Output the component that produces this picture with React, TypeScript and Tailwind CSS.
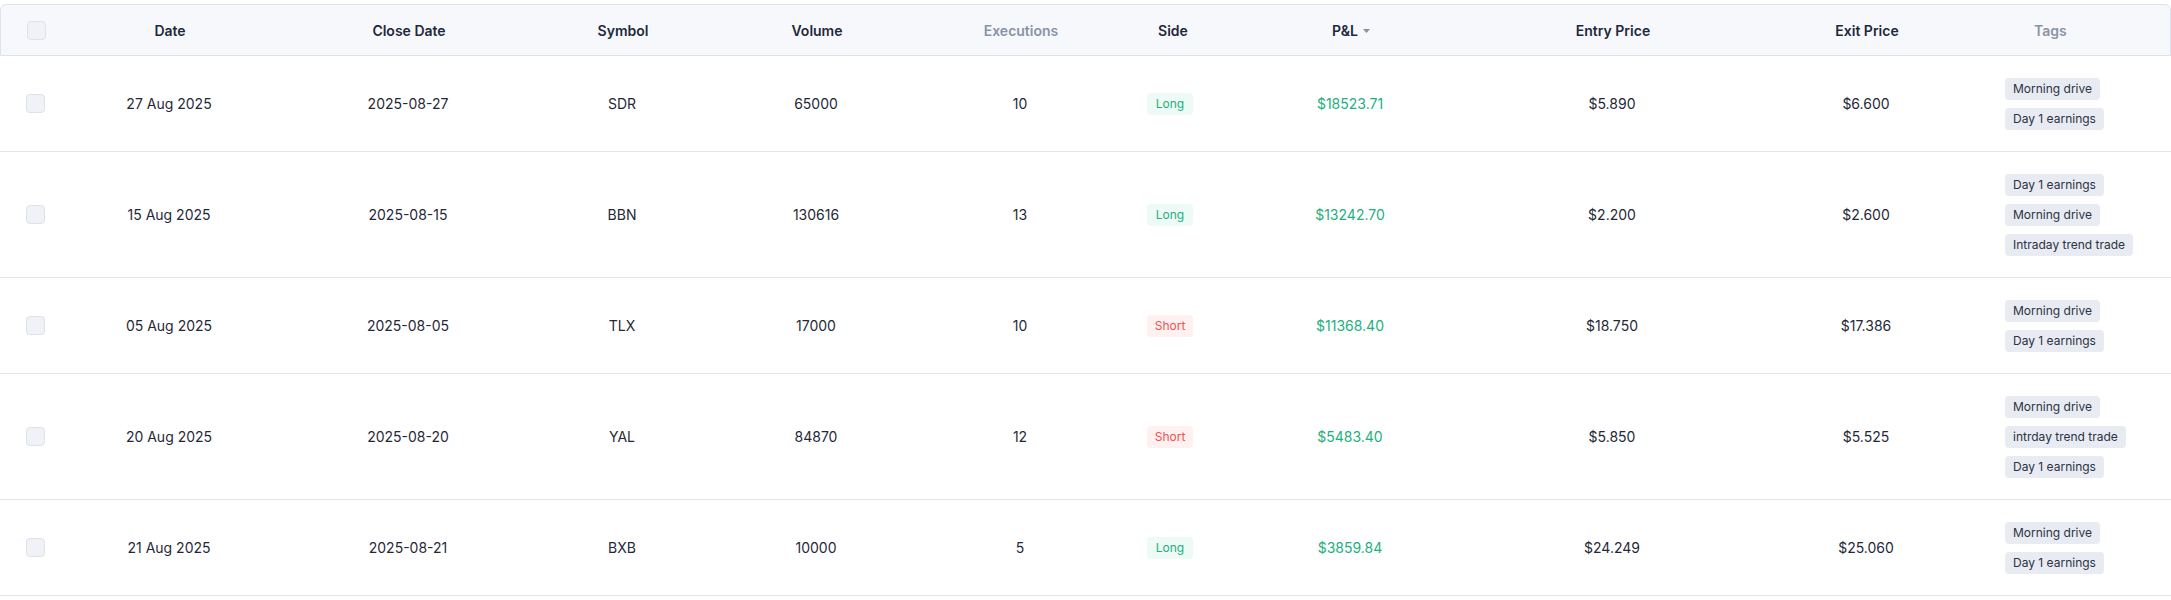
type Trade = {
  date: string;
  closeDate: string;
  symbol: string;
  volume: number;
  executions: number;
  side: "Long" | "Short";
  pnl: string;
  entry: string;
  exit: string;
  tags: string[];
};

const trades: Trade[] = [
  { date: "27 Aug 2025", closeDate: "2025-08-27", symbol: "SDR", volume: 65000, executions: 10, side: "Long", pnl: "$18523.71", entry: "$5.890", exit: "$6.600", tags: ["Morning drive", "Day 1 earnings"] },
  { date: "15 Aug 2025", closeDate: "2025-08-15", symbol: "BBN", volume: 130616, executions: 13, side: "Long", pnl: "$13242.70", entry: "$2.200", exit: "$2.600", tags: ["Day 1 earnings", "Morning drive", "Intraday trend trade"] },
  { date: "05 Aug 2025", closeDate: "2025-08-05", symbol: "TLX", volume: 17000, executions: 10, side: "Short", pnl: "$11368.40", entry: "$18.750", exit: "$17.386", tags: ["Morning drive", "Day 1 earnings"] },
  { date: "20 Aug 2025", closeDate: "2025-08-20", symbol: "YAL", volume: 84870, executions: 12, side: "Short", pnl: "$5483.40", entry: "$5.850", exit: "$5.525", tags: ["Morning drive", "intrday trend trade", "Day 1 earnings"] },
  { date: "21 Aug 2025", closeDate: "2025-08-21", symbol: "BXB", volume: 10000, executions: 5, side: "Long", pnl: "$3859.84", entry: "$24.249", exit: "$25.060", tags: ["Morning drive", "Day 1 earnings"] },
];

const cols = "grid grid-cols-[60px_218px_260px_168px_220px_188px_112px_248px_276px_232px_1fr] items-center";

const Checkbox = () => (
  <div className="ml-[26px] w-[19px] h-[19px] rounded-[4px] border border-[#dde1ea] bg-[#f0f2f7]" />
);

const SideBadge = ({ side }: { side: Trade["side"] }) =>
  side === "Long" ? (
    <span className="inline-block rounded-[4px] bg-[#eefaf5] px-[9px] py-[3px] text-[12px] leading-4 text-[#22b07d]">Long</span>
  ) : (
    <span className="inline-block rounded-[4px] bg-[#fff1f0] px-[8px] py-[3px] text-[12px] leading-4 text-[#f0524f]">Short</span>
  );

export default function App() {
  return (
    <div className="min-h-screen bg-white pt-[4px] font-['Inter',sans-serif] text-[14px] text-[#1f2937]">
      <div className={`${cols} h-[52px] rounded-t-[6px] border border-[#dfe2ec] bg-[#f7f8fc] font-semibold text-[#1e293b]`}>
        <Checkbox />
        <div className="text-center">Date</div>
        <div className="text-center">Close Date</div>
        <div className="text-center">Symbol</div>
        <div className="text-center">Volume</div>
        <div className="text-center text-[#8a93a6]">Executions</div>
        <div className="pl-[4px] text-center">Side</div>
        <div className="flex items-center justify-center gap-[5px]">
          P&amp;L
          <svg width="7" height="4" viewBox="0 0 7 4" className="mt-[1px]">
            <path d="M0 0h7L3.5 4z" fill="#8b8f99" />
          </svg>
        </div>
        <div className="text-center">Entry Price</div>
        <div className="text-center">Exit Price</div>
        <div className="pl-[51px] text-[#8a93a6]">Tags</div>
      </div>

      {trades.map((t, i) => (
        <div key={i} className={`${cols} border-b border-[#e2e4ee] py-[21.5px]`}>
          <Checkbox />
          <div className="text-center">{t.date}</div>
          <div className="text-center">{t.closeDate}</div>
          <div className="text-center">{t.symbol}</div>
          <div className="text-center">{t.volume}</div>
          <div className="text-center">{t.executions}</div>
          <div className="text-center">
            <SideBadge side={t.side} />
          </div>
          <div className="text-center text-[#22b07d]">{t.pnl}</div>
          <div className="text-center">{t.entry}</div>
          <div className="text-center">{t.exit}</div>
          <div className="flex flex-col items-start gap-[8px] pl-[23px]">
            {t.tags.map((tag) => (
              <span key={tag} className="rounded-[4px] bg-[#e8ebf2] px-2 py-[3px] text-[12px] leading-4 whitespace-nowrap text-[#2b3245]">
                {tag}
              </span>
            ))}
          </div>
        </div>
      ))}
    </div>
  );
}
